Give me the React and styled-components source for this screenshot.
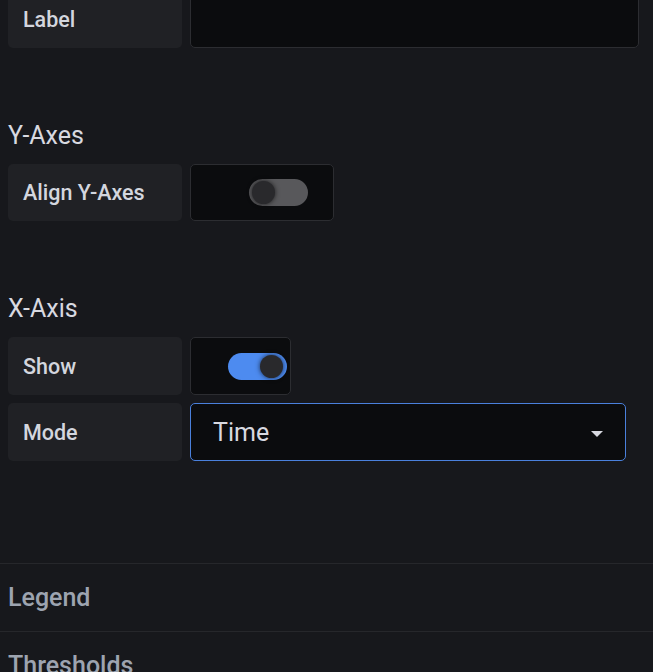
import React from "react";
import styled, { createGlobalStyle } from "styled-components";

const GlobalStyle = createGlobalStyle`
  html, body {
    margin: 0;
    padding: 0;
    background: #17181c;
    overflow: hidden;
  }
  body {
    font-family: Roboto, "Liberation Sans", sans-serif;
    color: #ccccdc;
  }
`;

const Page = styled.div`
  width: 653px;
  height: 672px;
  overflow: hidden;
  background: #17181c;
`;

const Panel = styled.div`
  margin-top: -9px;
  padding: 0 14px 0 8px;
`;

const Section = styled.section`
  display: flex;
  flex-direction: column;
  gap: 8px;
  margin-top: ${(p) => p.$top || 0}px;
`;

const Heading = styled.h3`
  margin: 0;
  height: 42px;
  display: flex;
  align-items: center;
  font-size: 25px;
  font-weight: 400;
  color: #d8d9e0;
`;

const Row = styled.div`
  display: flex;
  gap: 8px;
  height: ${(p) => p.$height || 58}px;
`;

const Label = styled.div`
  width: 174px;
  flex: none;
  display: flex;
  align-items: center;
  padding: 0 15px;
  box-sizing: border-box;
  background: #202125;
  border-radius: 5px;
  font-size: 21.5px;
  font-weight: 500;
  color: #d3d6de;
`;

const Field = styled.div`
  width: ${(p) => p.$width}px;
  flex: none;
  box-sizing: border-box;
  background: #0b0c0e;
  border: 1px solid ${(p) => (p.$focus ? "#4a80dc" : "#2c2d31")};
  border-radius: 5px;
  display: flex;
  align-items: center;
  padding: 0 ${(p) => p.$pad || 0}px;
`;

const Track = styled.div`
  width: 59px;
  height: 27px;
  border-radius: 14px;
  background: ${(p) => (p.$on ? "#4d8bf0" : "#58585b")};
  position: relative;
  margin-left: ${(p) => p.$offset}px;
`;

const Knob = styled.div`
  position: absolute;
  top: 2px;
  left: ${(p) => (p.$on ? 32 : 3)}px;
  width: 23px;
  height: 23px;
  border-radius: 50%;
  background: #29292c;
  box-shadow: 0 0 5px rgba(0, 0, 0, 0.7);
`;

const SelectText = styled.span`
  flex: 1;
  font-size: 25px;
  color: #d8d9e0;
`;

const Caret = styled.span`
  width: 0;
  height: 0;
  border-left: 6px solid transparent;
  border-right: 6px solid transparent;
  border-top: 6px solid #d8d9e0;
  margin-top: 3px;
`;

const Collapse = styled.div`
  border-top: 1px solid #26272b;
  height: 67px;
  display: flex;
  align-items: center;
  padding-left: 8px;
  font-size: 25px;
  font-weight: 500;
  color: #9da4b0;
`;

const Footer = styled.div`
  margin-top: 102px;
`;

function Toggle({ on, offset }) {
  return (
    <Track $on={on} $offset={offset}>
      <Knob $on={on} />
    </Track>
  );
}

export default function App() {
  return (
    <Page>
      <GlobalStyle />
      <Panel>
        <Section>
          <Row $height={57}>
            <Label>Label</Label>
            <Field $width={449} />
          </Row>
        </Section>

        <Section $top={66}>
          <Heading>Y-Axes</Heading>
          <Row $height={57}>
            <Label>Align Y-Axes</Label>
            <Field $width={144}>
              <Toggle on={false} offset={58} />
            </Field>
          </Row>
        </Section>

        <Section $top={66}>
          <Heading>X-Axis</Heading>
          <Row>
            <Label>Show</Label>
            <Field $width={101}>
              <Toggle on offset={37} />
            </Field>
          </Row>
          <Row>
            <Label>Mode</Label>
            <Field $width={436} $focus $pad={22}>
              <SelectText>Time</SelectText>
              <Caret />
            </Field>
          </Row>
        </Section>
      </Panel>
      <Footer>
        <Collapse>Legend</Collapse>
        <Collapse>Thresholds</Collapse>
      </Footer>
    </Page>
  );
}
